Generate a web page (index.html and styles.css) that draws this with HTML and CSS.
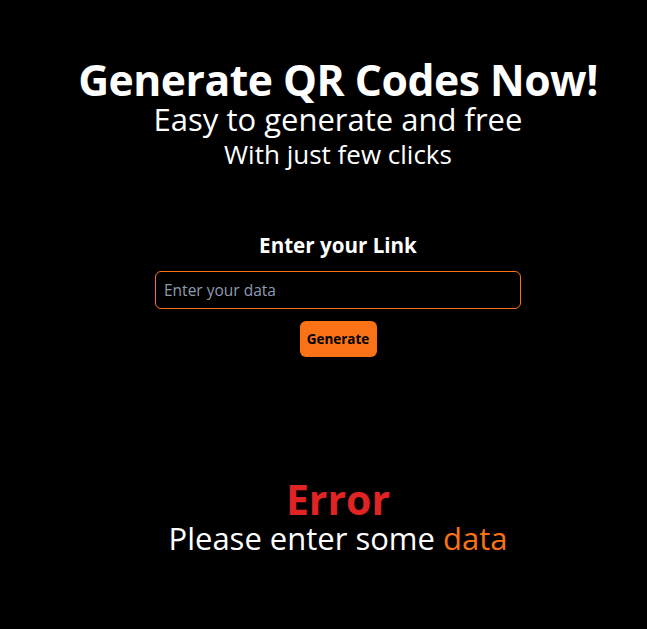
FILE: index.html
```html
<!DOCTYPE html>
<html lang="en">
<head>
<meta charset="utf-8">
<title>QR Code Generator</title>
<link rel="stylesheet" href="styles.css">
</head>
<body>
<main class="page">
  <header class="hero">
    <h1 class="hero-title">Generate QR Codes Now!</h1>
    <p class="hero-sub">Easy to generate and free</p>
    <p class="hero-sub2">With just few clicks</p>
  </header>
  <section class="form">
    <h2 class="form-title">Enter your Link</h2>
    <input class="form-input" type="text" placeholder="Enter your data">
    <button class="form-btn" type="button">Generate</button>
  </section>
  <section class="result">
    <h2 class="result-title">Error</h2>
    <p class="result-msg">Please enter some <span class="accent">data</span></p>
  </section>
</main>
</body>
</html>
```
FILE: styles.css
```css
* { box-sizing: border-box; }
html, body { margin: 0; padding: 0; background: #000; }
body {
  font-family: "Open Sans", "Noto Sans", sans-serif;
  color: #fff;
  min-height: 629px;
}
.page {
  padding-left: 29px;
  display: flex;
  flex-direction: column;
  align-items: center;
}
.hero {
  display: flex;
  flex-direction: column;
  align-items: center;
  padding-top: 56px;
}
.hero-title {
  margin: 0;
  font-size: 42.7px;
  font-weight: 700;
  line-height: 48px;
  letter-spacing: -0.5px;
}
.hero-sub {
  margin: 0;
  font-size: 31px;
  line-height: 30px;
  font-weight: 400;
}
.hero-sub2 {
  margin: 0;
  font-size: 26px;
  line-height: 40px;
}
.form {
  display: flex;
  flex-direction: column;
  align-items: center;
  margin-top: 57px;
}
.form-title {
  margin: 0;
  font-size: 20.6px;
  font-weight: 700;
  line-height: 28px;
}
.form-input {
  margin-top: 12px;
  width: 366px;
  height: 38px;
  background: #000;
  border: 1px solid #f97316;
  border-radius: 6px;
  color: #fff;
  font-family: inherit;
  font-size: 15.5px;
  padding: 0 8px;
  outline: none;
}
.form-input::placeholder { color: #8f9bb0; }
.form-btn {
  margin-top: 12px;
  width: 77px;
  height: 36px;
  background: #f97316;
  border: none;
  border-radius: 6px;
  color: #000;
  font-family: inherit;
  font-weight: 700;
  font-size: 13.5px;
  padding: 0;
}
.result {
  display: flex;
  flex-direction: column;
  align-items: center;
  margin-top: 120px;
}
.result-title {
  margin: 0;
  color: #e02424;
  font-size: 41px;
  font-weight: 700;
  line-height: 44px;
}
.result-msg {
  margin: 0;
  font-size: 31px;
  line-height: 34px;
}
.accent { color: #f97316; }
```
